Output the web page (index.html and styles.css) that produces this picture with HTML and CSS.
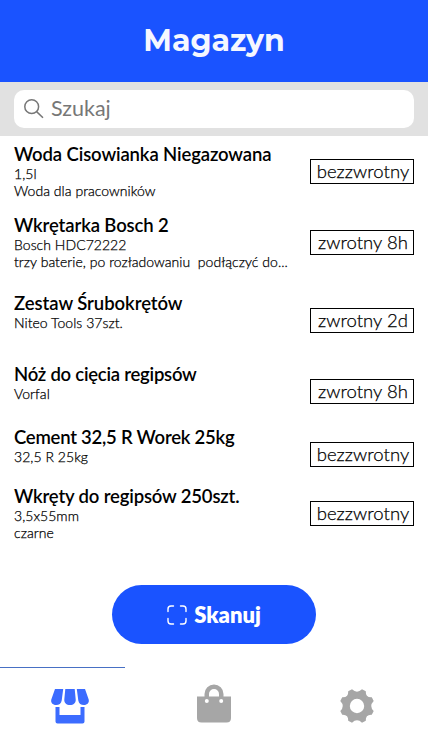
FILE: index.html
```html
<!DOCTYPE html>
<html lang="pl">
<head>
<meta charset="utf-8">
<title>Magazyn</title>
<link rel="stylesheet" href="styles.css">
</head>
<body>
<div class="app">
  <header class="header"><h1 class="heading">Magazyn</h1></header>
  <div class="search-bar">
    <div class="search">
      <svg class="search-icon" width="20" height="20" viewBox="0 0 20 20"><circle cx="7.7" cy="7.7" r="6.9"/><path d="M12.6 12.6 19 18.8"/></svg>
      <span class="placeholder">Szukaj</span>
    </div>
  </div>
  <main class="list">
    <article class="item item-a"><div class="info"><h2 class="name n1">Woda Cisowianka Niegazowana</h2><p class="detail">1,5l</p><p class="detail">Woda dla pracowników</p></div><span class="tag">bezzwrotny</span></article>
    <article class="item item-b"><div class="info"><h2 class="name n2">Wkrętarka Bosch 2</h2><p class="detail">Bosch HDC72222</p><p class="detail">trzy baterie, po rozładowaniu&nbsp; podłączyć do...</p></div><span class="tag">zwrotny 8h</span></article>
    <article class="item item-a"><div class="info"><h2 class="name n3">Zestaw Śrubokrętów</h2><p class="detail">Niteo Tools 37szt.</p></div><span class="tag">zwrotny 2d</span></article>
    <article class="item item-c"><div class="info"><h2 class="name n4">Nóż do cięcia regipsów</h2><p class="detail">Vorfal</p></div><span class="tag">zwrotny 8h</span></article>
    <article class="item item-d"><div class="info"><h2 class="name n5">Cement 32,5 R Worek 25kg</h2><p class="detail">32,5 R 25kg</p></div><span class="tag">bezzwrotny</span></article>
    <article class="item"><div class="info"><h2 class="name n6">Wkręty do regipsów 250szt.</h2><p class="detail">3,5x55mm</p><p class="detail">czarne</p></div><span class="tag">bezzwrotny</span></article>
  </main>
  <button class="scan">
    <svg class="scan-icon" width="20" height="20" viewBox="0 0 20 20"><path d="M1 6.500V4Q1 1 4 1h2.500M13.500 1H16q3 0 3 3v2.500M19 13.500V16q0 3-3 3h-2.500M6.500 19H4q-3 0-3-3v-2.500"/></svg>
    <span class="scan-label">Skanuj</span>
  </button>
  <nav class="tabs">
    <a class="tab active">
      <svg width="40" height="36" viewBox="0 0 40 36"><path d="M5 0h8.200l-1.500 11.500C11.200 14.500 9 16 6.200 16 2.500 16 .6 13.600 1.300 10.500ZM15.300 0h9.400l1 10.500C26 14 23.500 16 20 16s-6-2-5.700-5.500ZM26.800 0H35l3.700 10.500C39.400 13.600 37.500 16 33.800 16c-2.800 0-5-1.500-5.500-4.500ZM5.500 18H9.500v8h21v-8h4v14.500q0 2-2 2h-25q-2 0-2-2Z"/></svg>
    </a>
    <a class="tab bag">
      <svg width="34" height="39" viewBox="0 0 34 39"><path fill-rule="evenodd" d="M0 12.500h7.500V10a9.500 9.500 0 0 1 19 0v2.500H34V34q0 4.500-4.500 4.500h-25Q0 38.500 0 34Zm12 0h10V10a5 5 0 0 0-10 0ZM9.800 15a2 2 0 1 0 0 4 2 2 0 0 0 0-4Zm14.400 0a2 2 0 1 0 0 4 2 2 0 0 0 0-4Z"/></svg>
    </a>
    <a class="tab gear">
      <svg width="34" height="34" viewBox="0 0 34 34"><path fill-rule="evenodd" d="M12 .3Q17 5.200 22 .3L25.800 2.200Q25.400 8.600 31.800 8.200L33.700 12Q28.800 17 33.700 22L31.800 25.800Q25.400 25.400 25.800 31.800L22 33.700Q17 28.800 12 33.700L8.200 31.800Q8.600 25.400 2.200 25.800L.3 22Q5.200 17 .3 12L2.200 8.200Q8.600 8.600 8.200 2.200ZM17 9.800a7.200 7.200 0 1 0 0 14.400 7.200 7.200 0 0 0 0-14.400Z"/></svg>
    </a>
  </nav>
</div>
</body>
</html>
```
FILE: styles.css
```css
* { box-sizing: border-box; margin: 0; padding: 0; }
body { background: #fff; color: #000; font-family: Lato, sans-serif; }
.app { width: 428px; height: 756px; display: flex; flex-direction: column; overflow: hidden; }
.header { height: 82px; background: #1a53ff; display: flex; align-items: center; justify-content: center; }
.heading { font: 700 30px/40px Montserrat, Inter, sans-serif; color: #f5f7ff; white-space: nowrap; }
.search-bar { height: 54px; background: #e1e1e1; padding: 8px 14px; }
.search { height: 38px; border-radius: 10px; background: #fff; display: flex; align-items: center; padding-left: 10px; gap: 7px; }
.search-icon { fill: none; stroke: #777; stroke-width: 1.5; }
.placeholder { font-size: 21.5px; line-height: 26px; margin-top: -3px; color: #777; }
.list { height: 449px; padding: 7px 14px 0; }
.item { display: flex; justify-content: space-between; height: 59px; }
.item-a { height: 71px; }
.item-b { height: 78px; }
.item-c { height: 63px; }
.item-d { height: 59px; }
.name { font-size: 18.5px; font-weight: 600; line-height: 22px; white-space: nowrap; }
.n1, .n2 { letter-spacing: -0.12px; }
.n3 { letter-spacing: -0.05px; }
.n4, .n5 { letter-spacing: -0.24px; }
.n6 { letter-spacing: -0.16px; }
.detail { font-size: 14px; line-height: 17px; font-weight: 300; letter-spacing: 0.04px; -webkit-text-stroke: 0.25px #000; white-space: nowrap; }
.tag { flex: none; width: 104px; height: 25px; margin-top: 16px; border: 1px solid #000; font-size: 18.5px; font-weight: 300; line-height: 22px; letter-spacing: 0.04px; -webkit-text-stroke: 0.25px #000; text-align: center; padding-left: 2px; white-space: nowrap; }
.scan { align-self: center; width: 204px; height: 59px; border: 0; border-radius: 30px; background: #1a53ff; color: #fff; font-family: inherit; display: flex; align-items: center; justify-content: center; gap: 7px; flex: none; }
.scan-icon { fill: none; stroke: #fff; stroke-width: 1.4; stroke-linecap: round; }
.scan-label { font-size: 22px; font-weight: 800; }
.tabs { margin-top: 23px; height: 89px; display: flex; justify-content: space-between; align-items: flex-start; padding: 0 54px 0 0; background: linear-gradient(#4770c4, #4770c4) 0 0 / 125px 1px no-repeat; }
.tab { display: block; fill: #a6a6a6; }
.tab svg { display: block; }
.active { fill: #3c6cff; padding-top: 22px; padding-left: 50px; }
.bag { padding-top: 17px; padding-right: 2px; }
.gear { padding-top: 22px; }
```
